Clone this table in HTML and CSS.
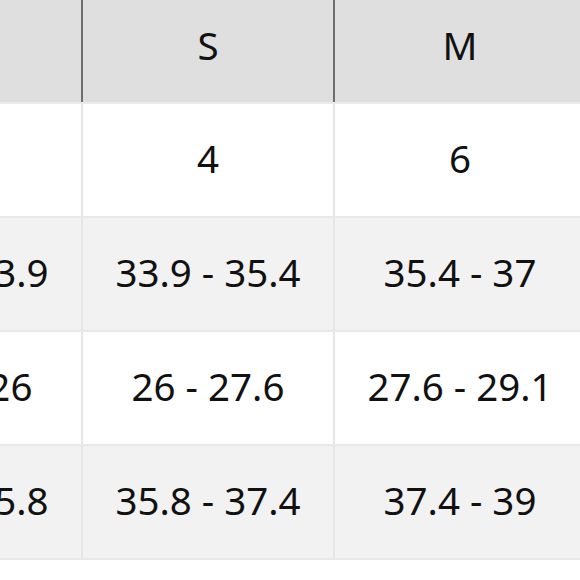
FILE: index.html
```html
<!DOCTYPE html>
<html>
<head>
<meta charset="utf-8">
<link rel="stylesheet" href="styles.css">
</head>
<body>
<div class="table">
  <div class="row head">
    <div class="cell">XS</div>
    <div class="cell">S</div>
    <div class="cell">M</div>
  </div>
  <div class="row">
    <div class="cell">2</div>
    <div class="cell">4</div>
    <div class="cell">6</div>
  </div>
  <div class="row alt">
    <div class="cell">32.3 - 33.9</div>
    <div class="cell">33.9 - 35.4</div>
    <div class="cell">35.4 - 37</div>
  </div>
  <div class="row">
    <div class="cell">24.4 - 26</div>
    <div class="cell">26 - 27.6</div>
    <div class="cell">27.6 - 29.1</div>
  </div>
  <div class="row alt">
    <div class="cell">34.3 - 35.8</div>
    <div class="cell">35.8 - 37.4</div>
    <div class="cell">37.4 - 39</div>
  </div>
</div>
</body>
</html>
```
FILE: styles.css
```css
html, body {
  margin: 0;
  padding: 0;
  background: #ffffff;
  overflow: hidden;
}
.table {
  margin-left: -169px;
  width: 770px;
  font-family: "Noto Sans", "Open Sans", sans-serif;
  font-size: 38.5px;
  color: #111111;
}
.row {
  display: flex;
  height: 112px;
  border-bottom: 2px solid #e8e8e8;
  background: #ffffff;
}
.row.alt {
  background: #f2f2f2;
}
.row.head {
  height: 102px;
  background: #dfdfdf;
  border-bottom: 2px solid #ebebeb;
}
.cell {
  width: 250px;
  flex: none;
  display: flex;
  align-items: center;
  justify-content: center;
  padding-bottom: 4px;
  border-right: 2px solid #e6e6e6;
}
.head .cell {
  border-right-color: #6e6e6e;
  padding-bottom: 12px;
}
```
